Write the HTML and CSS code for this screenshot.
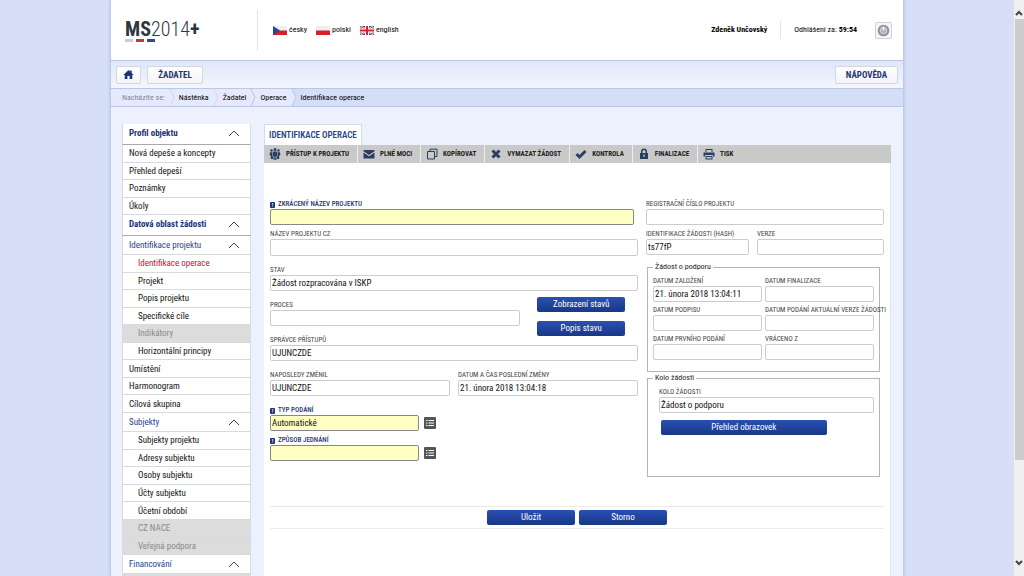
FILE: index.html
```html
<!DOCTYPE html>
<html lang="cs">
<head>
<meta charset="utf-8">
<title>MS2014+ – Identifikace operace</title>
<link rel="stylesheet" href="styles.css">
</head>
<body>
<div class="viewport">
<div class="wrapper">
  <header class="header">
    <a class="logo" href="#"><span class="logo-text"><b>MS</b>2014<b>+</b></span><span class="logo-bars"><i></i><i></i><i></i></span></a>
    <div class="languages">
      <a href="#"><svg class="flag" viewBox="0 0 14 9"><path fill="#eee" d="M0 0h14v5H0z"/><path fill="#d8202c" d="M0 4.500h14V9H0z"/><path fill="#244a96" d="M0 0l7 4.500L0 9z"/></svg>česky</a>
      <a href="#"><svg class="flag" viewBox="0 0 14 9"><path fill="#eee" d="M0 0h14v5H0z"/><path fill="#d8202c" d="M0 4.500h14V9H0z"/></svg>polski</a>
      <a href="#"><svg class="flag" viewBox="0 0 14 9"><path fill="#3d4c93" d="M0 0h14v9H0z"/><path stroke="#fff" stroke-width="2" d="M0 0l14 9M14 0L0 9"/><path stroke="#d8202c" d="M0 0l14 9M14 0L0 9"/><path stroke="#fff" stroke-width="4" d="M7 0v9M0 4.500h14"/><path stroke="#d8202c" stroke-width="2" d="M7 0v9M0 4.500h14"/></svg>english</a>
    </div>
    <div class="account">
      <b class="user">Zdeněk Unčovský</b>
      <span class="timer">Odhlášení za: <b>59:54</b></span>
      <button class="power" type="button" aria-label="Odhlásit"><svg viewBox="0 0 14 14"><circle cx="7" cy="7" r="6.300" fill="#92959c"/><circle cx="7" cy="7" r="3.500" fill="#b0b3b9" stroke="#dcdde2" stroke-width="1"/><path d="M7 3v4" stroke="#fff" stroke-width="1.600"/></svg></button>
    </div>
  </header>
  <nav class="topnav">
    <a class="tile tile-home" href="#" aria-label="Domů"><svg viewBox="0 0 12 12"><path fill="#1d3577" d="M6 1l1.800 1.700V1.600h1.700v2.700L11.600 6.500h-1.500V11H7.200V7.600H4.800V11H1.900V6.500H.4z"/></svg></a>
    <a class="tile" href="#">ŽADATEL</a>
    <a class="tile tile-help" href="#">NÁPOVĚDA</a>
  </nav>
  <nav class="crumbs">
    <span class="crumb crumb-lead">Nacházíte se:</span>
    <svg class="faint" viewBox="0 0 6 17"><path d="M1 0l4 8.500L1 17"/></svg>
    <a class="crumb" href="#">Nástěnka</a>
    <svg class="faint" viewBox="0 0 6 17"><path d="M1 0l4 8.500L1 17"/></svg>
    <a class="crumb" href="#">Žadatel</a>
    <svg viewBox="0 0 6 17"><path d="M1 0l4 8.500L1 17"/></svg>
    <a class="crumb" href="#">Operace</a>
    <span class="crumb-end"><svg viewBox="0 0 6 17"><path class="fill" d="M0 0h1l4 8.500L1 17H0z"/><path d="M1 0l4 8.500L1 17"/></svg><span class="crumb">Identifikace operace</span></span>
  </nav>
  <div class="body">
    <aside class="sidebar">
      <button class="section section-main" type="button">Profil objektu<svg viewBox="0 0 12 7"><path d="M1 6l5-5 5 5"/></svg></button>
      <ul class="menu menu-profile">
        <li><a href="#">Nová depeše a koncepty</a></li>
        <li><a href="#">Přehled depeší</a></li>
        <li><a href="#">Poznámky</a></li>
        <li><a href="#">Úkoly</a></li>
      </ul>
      <button class="section section-main" type="button">Datová oblast žádosti<svg viewBox="0 0 12 7"><path d="M1 6l5-5 5 5"/></svg></button>
      <button class="section" type="button">Identifikace projektu<svg viewBox="0 0 12 7"><path d="M1 6l5-5 5 5"/></svg></button>
      <ul class="menu menu-project">
        <li class="sub current"><a href="#">Identifikace operace</a></li>
        <li class="sub"><a href="#">Projekt</a></li>
        <li class="sub"><a href="#">Popis projektu</a></li>
        <li class="sub"><a href="#">Specifické cíle</a></li>
        <li class="sub off">Indikátory</li>
        <li class="sub"><a href="#">Horizontální principy</a></li>
        <li><a href="#">Umístění</a></li>
        <li><a href="#">Harmonogram</a></li>
        <li><a href="#">Cílová skupina</a></li>
      </ul>
      <button class="section" type="button">Subjekty<svg viewBox="0 0 12 7"><path d="M1 6l5-5 5 5"/></svg></button>
      <ul class="menu menu-subjects">
        <li class="sub"><a href="#">Subjekty projektu</a></li>
        <li class="sub"><a href="#">Adresy subjektu</a></li>
        <li class="sub"><a href="#">Osoby subjektu</a></li>
        <li class="sub"><a href="#">Účty subjektu</a></li>
        <li class="sub"><a href="#">Účetní období</a></li>
        <li class="sub off">CZ NACE</li>
        <li class="sub off">Veřejná podpora</li>
      </ul>
      <button class="section" type="button">Financování<svg viewBox="0 0 12 7"><path d="M1 6l5-5 5 5"/></svg></button>
      <ul class="menu"><li class="sub off"></li></ul>
    </aside>
    <main class="main">
      <h1 class="tab">IDENTIFIKACE OPERACE</h1>
      <div class="toolbar">
        <button type="button"><svg viewBox="0 0 12 12"><path d="M6 0a1.500 1.500 0 0 1 0 3 1.500 1.500 0 0 1 0-3zM2.500 1.200a1.200 1.200 0 0 1 0 2.500 1.200 1.200 0 0 1 0-2.500zM9.500 1.200a1.200 1.200 0 0 1 0 2.500 1.200 1.200 0 0 1 0-2.500zM4 3.500h4V8H7.500v4h-1.200V8.500h-.6V12H4.500V8H4zM1 4.200h2.500v4.200h.5V11H1.800V8L.6 6.800zM8.500 4.200H11l.4 2.600L10.200 8v3H8V8.400h.5z"/></svg>PŘÍSTUP K PROJEKTU</button>
        <button type="button"><svg viewBox="0 0 12 12"><path d="M.5 2h11v1.200L6 7 .5 3.200zM.5 4.500L6 8.300l5.500-3.800V10.500H.5z"/></svg>PLNÉ MOCI</button>
        <button type="button"><svg class="line" viewBox="0 0 12 12"><path d="M1.500 3.500h7v7.500h-7zM4 3.500V1.200h7v7.300H8.500"/></svg>KOPÍROVAT</button>
        <button type="button"><svg class="cross" viewBox="0 0 12 12"><path d="M2.500 2.500l7 7M9.500 2.500l-7 7"/></svg>VYMAZAT ŽÁDOST</button>
        <button type="button"><svg class="cross" viewBox="0 0 12 12"><path d="M1.500 6l3 3 6-6"/></svg>KONTROLA</button>
        <button type="button"><svg viewBox="0 0 12 12"><path fill-rule="evenodd" d="M3 5V3.500a3 3 0 0 1 6 0V5h1v6H2V5zM4.500 5h3V3.500a1.500 1.500 0 0 0-3 0zM5.400 6.500v2.500h1.200V6.500z"/></svg>FINALIZACE</button>
        <button type="button"><svg viewBox="0 0 12 12"><path fill-rule="evenodd" d="M2.500 1h7v3h-7zM3.500 2v2h5V2zM.5 4.500h11v4H10V7H2v1.500H.5zM2.500 8h7v3.500h-7zM3.500 9v1.500h5V9z"/></svg>TISK</button>
      </div>
      <form class="form">
        <div class="columns">
          <div class="col">
            <div class="field required first"><label for="f1"><i>!</i>ZKRÁCENÝ NÁZEV PROJEKTU</label><input id="f1"></div>
            <div class="field tall"><label for="f2">NÁZEV PROJEKTU CZ</label><input id="f2"></div>
            <div class="field spaced"><label for="f3">STAV</label><input id="f3" value="Žádost rozpracována v ISKP"></div>
            <div class="process spaced">
              <div class="field"><label for="f4">PROCES</label><input id="f4"></div>
              <div class="stack"><button class="btn" type="button">Zobrazení stavů</button><button class="btn" type="button">Popis stavu</button></div>
            </div>
            <div class="field spaced"><label for="f5">SPRÁVCE PŘÍSTUPŮ</label><input id="f5" value="UJUNCZDE"></div>
            <div class="pair spaced">
              <div class="field"><label for="f6">NAPOSLEDY ZMĚNIL</label><input id="f6" value="UJUNCZDE"></div>
              <div class="field"><label for="f7">DATUM A ČAS POSLEDNÍ ZMĚNY</label><input id="f7" value="21. února 2018 13:04:18"></div>
            </div>
            <div class="picker spaced">
              <div class="field required"><label for="f8"><i>!</i>TYP PODÁNÍ</label><input id="f8" value="Automatické"></div>
              <button class="list" type="button" aria-label="Vybrat typ podání"><svg viewBox="0 0 12 12"><path d="M2 3.500h1.500M4.500 3.500H10M2 6h1.500M4.500 6H10M2 8.500h1.500M4.500 8.500H10"/></svg></button>
            </div>
            <div class="picker">
              <div class="field required"><label for="f9"><i>!</i>ZPŮSOB JEDNÁNÍ</label><input id="f9"></div>
              <button class="list" type="button" aria-label="Vybrat způsob jednání"><svg viewBox="0 0 12 12"><path d="M2 3.500h1.500M4.500 3.500H10M2 6h1.500M4.500 6H10M2 8.500h1.500M4.500 8.500H10"/></svg></button>
            </div>
          </div>
          <div class="col">
            <div class="field"><label for="r1">REGISTRAČNÍ ČÍSLO PROJEKTU</label><input id="r1"></div>
            <div class="ids">
              <div class="field"><label for="r2">IDENTIFIKACE ŽÁDOSTI (HASH)</label><input id="r2" value="ts77fP"></div>
              <div class="field"><label for="r3">VERZE</label><input id="r3"></div>
            </div>
            <fieldset class="group group-dates">
              <legend>Žádost o podporu</legend>
              <div class="dates">
                <div class="field"><label for="d1">DATUM ZALOŽENÍ</label><input id="d1" value="21. února 2018 13:04:11"></div>
                <div class="field"><label for="d2">DATUM FINALIZACE</label><input id="d2"></div>
                <div class="field"><label for="d3">DATUM PODPISU</label><input id="d3"></div>
                <div class="field"><label for="d4">DATUM PODÁNÍ AKTUÁLNÍ VERZE ŽÁDOSTI</label><input id="d4"></div>
                <div class="field"><label for="d5">DATUM PRVNÍHO PODÁNÍ</label><input id="d5"></div>
                <div class="field"><label for="d6">VRÁCENO Z</label><input id="d6"></div>
              </div>
            </fieldset>
            <fieldset class="group group-round">
              <legend>Kolo žádosti</legend>
              <div class="round">
                <div class="field"><label for="k1">KOLO ŽÁDOSTI</label><input id="k1" value="Žádost o podporu"></div>
                <button class="btn btn-wide" type="button">Přehled obrazovek</button>
              </div>
            </fieldset>
          </div>
        </div>
        <div class="actions"><button class="btn" type="submit">Uložit</button><button class="btn" type="button">Storno</button></div>
      </form>
    </main>
  </div>
</div>
</div>
<div class="scrollbar"><svg viewBox="0 0 10 8"><path d="M2 6l3-3 3 3"/></svg><span class="thumb"></span><svg viewBox="0 0 10 8"><path d="M2 2l3 3 3-3"/></svg></div>
</body>
</html>
```

FILE: styles.css
```css
* { box-sizing: border-box; }
body {
  margin: 0;
  height: 100vh;
  display: flex;
  overflow: hidden;
  background: #d6dff7;
  color: #222;
  font: 9px/12px "Roboto Condensed", "Liberation Sans Narrow", Roboto, sans-serif;
}
a { color: inherit; text-decoration: none; }
button, input { font: inherit; color: inherit; margin: 0; padding: 0; border: 0; background: none; border-radius: 0; }
svg { display: block; flex: none; }
.viewport { flex: 1; display: flex; justify-content: center; overflow: hidden; }
.wrapper {
  width: 100%;
  max-width: 794px;
  display: flex;
  flex-direction: column;
  background: #edf0fd;
  border: solid #c0cae8;
  border-width: 0 1px;
  box-shadow: 0 0 3px #b4bfe0;
}

.header { height: 60px; flex: none; display: flex; align-items: center; padding: 0 11px 0 14px; background: #fff; font-size: 8px; color: #000; }
.logo { width: 133px; height: 41px; padding-top: 9px; border-right: 1px solid #e4e4e4; color: #30373f; }
.logo-text { display: block; font-size: 20px; line-height: 20px; font-weight: 300; }
.logo-text b { font-weight: 700; }
.logo-bars { display: flex; gap: 3px; }
.logo-bars i { width: 8px; height: 3px; background: #ccc; }
.logo-bars i:nth-child(2) { background: #c2392f; }
.logo-bars i:nth-child(3) { background: #2948a0; }
.languages { display: flex; gap: 9px; padding-left: 15px; }
.languages a { display: flex; align-items: center; gap: 2px; }
.flag { width: 14px; height: 9px; }
.account { margin-left: auto; display: flex; align-items: center; }
.user { padding-right: 13px; }
.timer { padding: 3px 18px 3px 13px; border-left: 1px solid #e4e4e4; }
.power { width: 17px; height: 17px; border: 1px solid #cdd0d8; border-radius: 2px; display: grid; place-items: center; background: #f6f6f8; }
.power svg { width: 13px; height: 13px; }

.topnav { height: 29px; flex: none; display: flex; align-items: center; gap: 6px; padding: 0 5px; border: solid #bcc7e4; border-width: 1px 0; background: linear-gradient(#e0e7fa, #f3f6ff); }
.tile { height: 18px; min-width: 56px; display: grid; place-items: center; border: 1px solid #d3d6df; border-radius: 2px; background: linear-gradient(#fff, #f4f4f7); color: #1d3577; font-weight: 700; }
.tile-home { min-width: 25px; }
.tile-home svg { width: 11px; height: 11px; }
.tile-help { margin-left: auto; min-width: 63px; }

.crumbs { height: 18px; flex: none; display: flex; align-items: center; padding-left: 11px; gap: 4px; font-size: 8px; color: #000; background: #e4eafb; border-bottom: 1px solid #bcc7e4; }
.crumbs svg { width: 6px; height: 17px; fill: none; stroke: #b9c4e2; }
.crumbs .faint { stroke: #d3daef; }
.crumb-lead { color: #7f8697; }
.crumb-end { flex: 1; align-self: stretch; display: flex; align-items: center; gap: 4px; background: #d4def6; }
.crumb-end .fill { fill: #e4eafb; stroke: none; }

.body { flex: 1; min-height: 0; display: flex; align-items: stretch; gap: 13px; padding: 17px 12px 0 11px; }
.sidebar { width: 129px; flex: none; overflow: hidden; }
.section { width: 100%; height: 19px; display: flex; align-items: center; justify-content: space-between; padding: 0 10px 0 6px; background: #fff; border: solid #d8dae2; border-width: 0 1px 1px; color: #27458c; text-align: left; }
.section svg { width: 12px; height: 7px; fill: none; stroke: #444; }
.section-main { height: 21px; padding-bottom: 2px; font-weight: 700; color: #1d3577; border-bottom-color: #aaa; }
.menu { list-style: none; margin: 0; padding: 0; display: grid; grid-auto-rows: 1fr; min-height: 17px; color: #111; }
.menu-profile { min-height: 70px; }
.menu-project { min-height: 158px; }
.menu-subjects { min-height: 123px; }
.menu li { display: flex; align-items: center; padding-left: 6px; background: #fff; border: solid #d8dae2; border-width: 0 1px 1px; }
.menu .sub { padding-left: 15px; }
.menu .current { color: #c4122f; }
.menu .off { background: #dcdcdc; color: #8a8a8a; }

.main { flex: 1; min-width: 0; display: flex; flex-direction: column; align-items: flex-start; }
.tab { margin: 0; height: 21px; padding: 0 4px; background: #fff; border: 1px solid #d8dae2; border-bottom: 0; color: #27458c; font-size: 9px; line-height: 20px; font-weight: 600; }
.toolbar { align-self: stretch; height: 18px; flex: none; display: flex; background: #c9c9c9; font-size: 7px; font-weight: 700; color: #222; }
.toolbar button { display: flex; align-items: center; gap: 5px; padding: 0 8px 0 5px; border-right: 1px solid #eee; }
.toolbar button:last-child { border: 0; }
.toolbar svg { width: 12px; height: 12px; fill: #2a3f5f; }
.toolbar .line { fill: none; stroke: #2a3f5f; }
.toolbar .cross { fill: none; stroke: #2a3f5f; stroke-width: 3; }

.form { align-self: stretch; flex: 1; padding: 37px 6px 0; background: #fff; border-right: 1px solid #dfe3f0; }
.columns { display: grid; grid-template-columns: 368fr 238fr; gap: 8px; min-height: 306px; }
.col { display: flex; flex-direction: column; gap: 5px; min-width: 0; }
.field { display: flex; flex-direction: column; min-width: 0; }
.field label { height: 9px; font-size: 7px; line-height: 9px; font-weight: 400; color: #444; white-space: nowrap; }
.field input { width: 100%; height: 16px; padding: 0 1px; border: 1px solid #ccc; border-radius: 2px; color: #111; }
.first input { width: 99%; }
.tall input { height: 17px; }
.spaced { margin-top: 5px; }
.field.required label { display: flex; align-items: center; gap: 3px; color: #1d3577; font-weight: 500; }
.required i { width: 5px; height: 6px; border-radius: 1px; background: #1d3577; color: #fff; font-size: 6px; line-height: 6px; font-style: normal; text-align: center; }
.field.required input { background: #ffffc4; border-color: #888; }
.process { display: grid; grid-template-columns: 68% 88px; gap: 17px; }
.stack { display: grid; gap: 9px; margin: -4px 0 -10px; align-content: start; }
.pair { display: grid; grid-template-columns: 1fr 1fr; gap: 8px; }
.picker { display: flex; align-items: flex-end; gap: 5px; }
.picker .field { width: 149px; }
.list { width: 12px; height: 16px; display: grid; place-items: center; }
.list svg { width: 12px; height: 12px; border-radius: 1px; background: #555; stroke: #fff; }
.ids { display: grid; grid-template-columns: 103fr 127fr; gap: 8px; }
.btn { min-width: 88px; height: 15px; border-radius: 2px; background: linear-gradient(#2a50b4, #173886); color: #fff; font-size: 9px; line-height: 15px; text-align: center; }
.group { min-width: 0; margin: 2px 4px 0 1px; padding: 5px 5px 0; border: 1px solid #b5b5b5; }
.group legend { padding: 0 2px; font-size: 8px; line-height: 10px; }
.group-dates { min-height: 110px; }
.group-round { min-height: 104px; margin-top: -4px; }
.round { padding-left: 6px; }
.dates { display: grid; grid-template-columns: 1fr 1fr; gap: 4px 3px; }
.btn-wide { display: block; width: 77%; margin: 7px 0 0 2px; }
.actions { display: flex; justify-content: center; gap: 4px; padding: 3px; border: solid #eaeaea; border-width: 1px 0; }

.scrollbar { width: 10px; flex: none; display: flex; flex-direction: column; justify-content: space-between; padding: 9px 0; background: #f0f0f1; }
.scrollbar svg { width: 10px; height: 8px; fill: none; stroke: #444; stroke-width: 2; }
.thumb { flex: 0 0 79%; margin: 2px 0 auto 1px; background: #cdcdcd; }
```
